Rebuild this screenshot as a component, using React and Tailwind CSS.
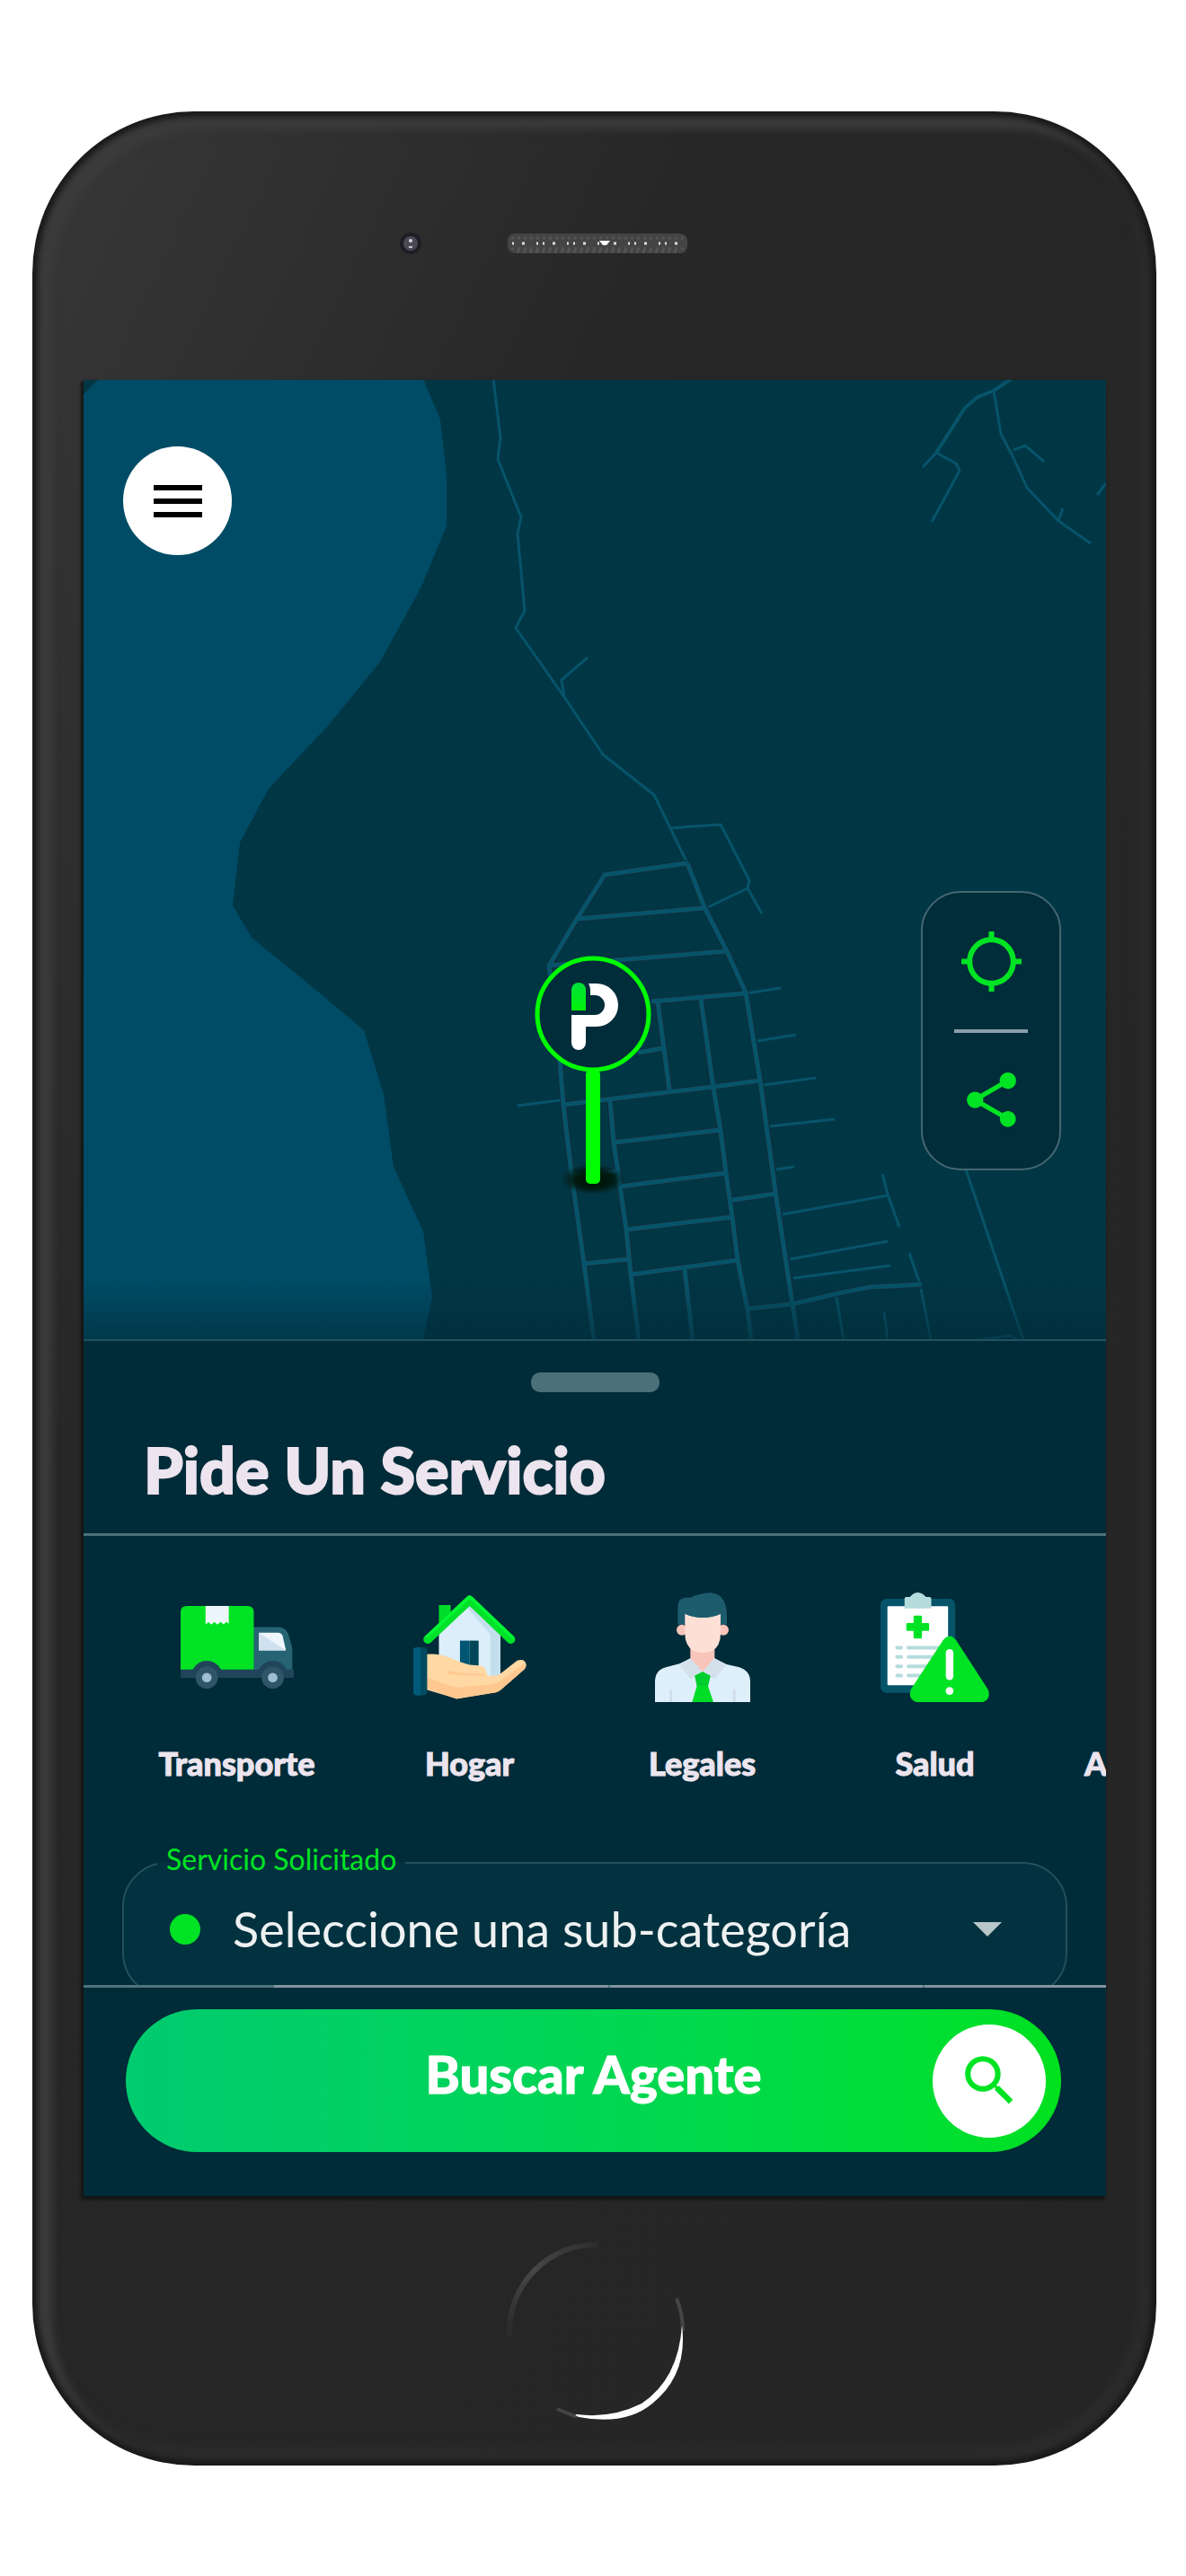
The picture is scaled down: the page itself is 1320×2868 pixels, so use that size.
import React from 'react';
import { MdLocationSearching, MdMenu, MdSearch, MdShare } from 'react-icons/md';

const mainRoads = [
  'M765 962 784 1011 809 1060 830 1106 846 1204 864 1335 882 1453 888 1493',
  'M765 962 673 975 642 1024 611 1076 623 1182 627 1231 636 1307 650 1408 661 1493',
  'M642 1024 784 1012M611 1076 809 1060M725 1116 830 1107M732 1116 745 1214',
  'M780 1113 794 1212 802 1260 808 1307 815 1356 821 1404 832 1459 836 1493',
  'M710 1173 738 1168M627 1231 668 1226 794 1211 846 1204',
  'M679 1226 683 1273 690 1321 697 1370 702 1420 711 1493',
  'M683 1273 802 1259M690 1322 808 1307M697 1370 815 1356M702 1420 821 1404',
  'M636 1309 686 1305M650 1408 699 1403M762 1414 771 1493M815 1337 864 1330',
  'M832 1458 882 1453 933 1441 968 1434 1026 1431',
];

const sideRoads = [
  'M549 423 557 488 554 512 580 577 576 595 584 681 574 700 628 777 671 841 728 886 746 923 765 962',
  'M628 777 625 758 654 733',
  'M746 923 802 919 834 981 832 990 788 1011M832 990 848 1018',
  'M830 1107 869 1101M843 1160 886 1153M850 1209 908 1201M857 1255 929 1247M864 1303 884 1300',
  'M576 1232 623 1226M871 1353 988 1332M982 1308 988 1331 1001 1367',
  'M879 1403 988 1383M883 1424 991 1410M1012 1396 1023 1428M1025 1436 1036 1493',
  'M931 1445 939 1493M984 1462 988 1493M1042 1205 1139 1493M1087 1493 1124 1488 1133 1493',
  'M1106 436 1114 484 1128 511 1143 544 1178 581 1214 606',
  'M1042 505 1064 517 1068 525 1037 582M1042 505 1027 521',
  'M1128 502 1141 497 1162 515M1178 580 1183 567M1231 539 1221 552',
];

function CityMap() {
  return (
    <svg
      className="absolute inset-0 h-full w-full"
      viewBox="93 423 1138 1070"
      preserveAspectRatio="xMidYMid slice"
      aria-hidden="true"
    >
      <defs>
        <linearGradient id="mapFade" x1="0" y1="0" x2="0" y2="1">
          <stop offset="0" stopColor="#012b38" stopOpacity="0" />
          <stop offset="1" stopColor="#012b38" stopOpacity="0.6" />
        </linearGradient>
        <linearGradient id="pinLogo" x1="0" y1="0" x2="0" y2="1">
          <stop offset="0" stopColor="#00e03c" />
          <stop offset="1" stopColor="#00f208" />
        </linearGradient>
        <radialGradient id="pinShadow">
          <stop offset="0" stopColor="#001204" />
          <stop offset="0.6" stopColor="#001508" stopOpacity="0.85" />
          <stop offset="1" stopColor="#001508" stopOpacity="0" />
        </radialGradient>
      </defs>

      <rect x="93" y="423" width="1138" height="1070" fill="#013645" />
      <path
        fill="#004c66"
        d="M110 423H471L490 468 497 530V586L469 654 423 738 365 809 299 879 267 939 259 1009 280 1045 349 1101 405 1148 427 1219 438 1300 471 1372 481 1445 471 1493H93V440Z"
      />

      <g fill="none" stroke="#07546a" strokeLinejoin="round">
        {sideRoads.map((d) => (
          <path key={d} d={d} strokeWidth="3" />
        ))}
        <path d="M1125 423 1106 436 1088 443 1074 455 1042 505" strokeWidth="4" />
      </g>
      <g fill="none" strokeLinejoin="round">
        {mainRoads.map((d) => (
          <path key={d} d={d} stroke="#12303e" strokeWidth="7" />
        ))}
        {mainRoads.map((d) => (
          <path key={d} d={d} stroke="#07546a" strokeWidth="5" />
        ))}
      </g>
      <rect x="93" y="1425" width="1138" height="68" fill="url(#mapFade)" />

      {/* Location pin */}
      <ellipse cx="660" cy="1314" rx="36" ry="17" fill="url(#pinShadow)" />
      <rect x="652" y="1192" width="16" height="127" rx="5" fill="#00ff00" />
      <circle cx="660" cy="1130" r="62" fill="#012c3a" stroke="#00ff00" strokeWidth="5" />
      <path d="M636 1126v-23a8 8 0 0 1 16 0v23Z" fill="url(#pinLogo)" />
      <path
        fill="#fff"
        d="M655 1096H664a24 24 0 0 1 0 48H652v18a8 8 0 0 1-16 0v-31h26a11 11 0 0 0 0-22h-5v-6q0-4-2-7Z"
      />
    </svg>
  );
}

function TruckIcon() {
  return (
    <svg viewBox="124 143 376 276" className="w-[126px]" aria-hidden="true">
      <path d="M366 213h83q24 0 33 24l9 31q4 10 4 20v68H366Z" fill="#266474" />
      <path d="M124 356V164q0-21 21-21h201q21 0 21 21v192Z" fill="#00e324" />
      <path d="M207 143h77v59l-8-6-9 8-10-8-11 9-10-9-10 9-9-8-10 7Z" fill="#edf6fc" />
      <path d="M124 354h40q17-29 47-29t48 29h124q17-29 47-29t47 29h23v28H124Z" fill="#20455a" />
      <path d="M384 232h63q12 0 16 11l11 48h-90Z" fill="#eef6fc" />
      <path d="M384 232 474 291H384Z" fill="#cfe0ee" />
      <g fill="#2f5569">
        <circle cx="211" cy="381" r="37" />
        <circle cx="430" cy="381" r="37" />
      </g>
      <g fill="#9fbdd3">
        <circle cx="211" cy="381" r="16" />
        <circle cx="430" cy="381" r="16" />
      </g>
    </svg>
  );
}

function HouseIcon() {
  return (
    <svg viewBox="900 108 376 346" className="w-[126px]" aria-hidden="true">
      <path d="M985 141h39v50l-39 28Z" fill="#00dc28" />
      <path d="M985 232 1087 144 1189 236V380H985Z" fill="#dceefa" />
      <path d="M1080 151 1087 144 1189 236V380h-33V238Z" fill="#c3dfee" />
      <path d="M1055 259h31v90h-31Z" fill="#005673" />
      <path d="M1086 259h31v90h-31Z" fill="#014659" />
      <path
        d="M948 255 1087 124 1224 255"
        fill="none"
        stroke="#00e12a"
        strokeWidth="29"
        strokeLinecap="round"
        strokeLinejoin="round"
      />
      <path
        d="M945 246 1087 113 1230 249"
        fill="none"
        stroke="#00fa36"
        strokeWidth="9"
        strokeLinecap="round"
        strokeLinejoin="round"
      />
      <path
        d="M944 304q46-3 80 13 32 14 62 22l40 3q16 4 20 34h25q10 0 17-6l56-44q20-8 28 4 7 12-3 24l-77 67q-8 7-18 10l-130 21-100-30Z"
        fill="#ffd8a4"
      />
      <path
        d="M944 382 1040 415 1150 406q26-2 42-16l78-56q9 8-1 20l-77 67q-8 7-18 10l-130 22-100-35Z"
        fill="#ffc890"
      />
      <path d="M1015 359q30 9 108 10l20 7h-40q-60-2-84-6-6-5-4-11Z" fill="#ffc890" />
      <rect x="900" y="281" width="46" height="160" rx="12" fill="#014a5f" />
      <path d="M912 281h13v160h-13q-12 0-12-12V293q0-12 12-12Z" fill="#005a78" />
    </svg>
  );
}

function LawyerIcon() {
  return (
    <svg viewBox="264 97 318 367" className="w-[106px]" aria-hidden="true">
      <path d="M340 204V147q0-37 42-33 30-14 64-16 58 0 58 80v26Z" fill="#1d5c6d" />
      <g fill="#f9c4ba">
        <circle cx="354" cy="222" r="18" />
        <circle cx="492" cy="222" r="18" />
        <path d="M382 270h81v60l-40 36-41-36Z" />
      </g>
      <path
        d="M264 463V395q0-38 36-48l46-12 36-18 41 46 40-46 40 20 43 10q36 12 36 48v68Z"
        fill="#deeffc"
      />
      <path d="M364 168q60 26 119 0v66q0 42-28 58-31 14-63 0-28-18-28-58Z" fill="#fedfd6" />
      <path d="M364 168q60 26 119 0v-30H364Z" fill="#1d5c6d" />
      <path d="M382 317 423 361 383 386 345 340ZM463 317 423 361 462 386 503 340Z" fill="#d4e1eb" />
      <path d="M317 422v41M529 422v41" stroke="#d0dde6" strokeWidth="8" />
      <path d="M397 375l26-13 26 13-8 34 18 54h-71l16-54Z" fill="#00dd27" />
      <path d="M397 375l26-13 26 13-8 34h-37Z" fill="#00ce2f" />
    </svg>
  );
}

function HealthIcon() {
  return (
    <svg viewBox="1018 97 362 367" className="w-[121px]" aria-hidden="true">
      <rect x="1018" y="118" width="249" height="313" rx="20" fill="#055469" />
      <rect x="1041" y="143" width="202" height="263" rx="3" fill="#fff" />
      <path d="M1098 150v-32q0-6 6-6h12q10-14 26-15 17 1 27 15h12q6 0 6 6v32Z" fill="#b5dcdd" />
      <path
        d="M1132 174h20q4 0 4 4v21h20q4 0 4 4v18q0 4-4 4h-20v21q0 4-4 4h-20q-4 0-4-4v-21h-20q-4 0-4-4v-18q0-4 4-4h20v-21q0-4 4-4Z"
        fill="#00e324"
      />
      <path
        d="M1073 281h14M1111 281h110M1073 312h14M1111 312h80M1073 343h14M1111 343h70M1073 374h14M1111 374h60"
        stroke="#b5dcdd"
        strokeWidth="12"
        strokeLinecap="round"
      />
      <path
        d="M1226 256q22-28 44 0L1376 420q12 34-20 43H1142q-34-8-23-43Z"
        fill="#00e324"
      />
      <path d="M1248 298v78" stroke="#fff" strokeWidth="25" strokeLinecap="round" />
      <circle cx="1248" cy="425" r="13" fill="#fff" />
    </svg>
  );
}

const categories = [
  { name: 'Transporte', Icon: TruckIcon },
  { name: 'Hogar', Icon: HouseIcon },
  { name: 'Legales', Icon: LawyerIcon },
  { name: 'Salud', Icon: HealthIcon },
];

function Category({ name, Icon }) {
  return (
    <button type="button" className="flex w-[259px] shrink-0 flex-col items-center gap-11">
      <span className="flex h-[122px] items-center">
        <Icon />
      </span>
      <span className="text-[36px] leading-[48px] font-black text-[#ece4ee] [-webkit-text-stroke:1px_#ece4ee]">
        {name}
      </span>
    </button>
  );
}

function MapView() {
  return (
    <section className="relative h-[1070px] overflow-hidden border-b-2 border-[#23525f]">
      <CityMap />
      <button
        type="button"
        aria-label="Menú"
        className="absolute top-[74px] left-11 flex size-[121px] items-center justify-center rounded-full bg-white"
      >
        <MdMenu className="size-[72px] text-black" />
      </button>

      <div className="absolute top-[569px] right-[50px] flex h-[311px] w-[156px] flex-col items-center justify-between rounded-[44px] border-2 border-[#456772] bg-[#012b38]/92 py-10">
        <button type="button" aria-label="Mi ubicación">
          <MdLocationSearching className="size-[73px] text-[#00e324]" />
        </button>
        <div className="h-1 w-[82px] bg-[#8a9fab]" />
        <button type="button" aria-label="Compartir">
          <MdShare className="size-[73px] text-[#00e324]" />
        </button>
      </div>
    </section>
  );
}

function ServiceSheet() {
  return (
    <section className="flex flex-col">
      <div className="mx-auto mt-[35px] h-[22px] w-[143px] rounded-[10px] bg-[#4b7079]" />
      <h1 className="mt-11 px-[67px] text-[70px] leading-[84px] font-black text-[#ece4ee] [-webkit-text-stroke:2px_#ece4ee]">
        Pide Un Servicio
      </h1>
      <div className="mt-[29px] h-[3px] bg-[#4b7079]" />

      <div className="flex overflow-hidden pt-[63px] pl-[41px]">
        {categories.map((c) => (
          <Category key={c.name} {...c} />
        ))}
        <button type="button" className="mt-[166px] w-[259px] shrink-0 pl-[37px] text-left">
          <span className="text-[36px] leading-[48px] font-black text-[#ece4ee] [-webkit-text-stroke:1px_#ece4ee]">
            A
          </span>
        </button>
      </div>

      <div className="mt-[61px] h-[162px] overflow-hidden px-[43px] pt-1">
        <fieldset className="rounded-[50px] border-2 border-[#24505d] bg-[#02323f] pb-[22px]">
          <legend className="ml-[37px] px-[10px] pb-2 text-[32px] leading-[36px] text-[#00e324]">
            <label htmlFor="subcategory" className="block">
              Servicio Solicitado
            </label>
          </legend>
          <div className="flex h-[104px] items-center pr-[71px] pl-[51px]">
            <span className="size-[34px] shrink-0 rounded-full bg-[#00e324]" />
            <select
              id="subcategory"
              className="ml-9 min-w-0 flex-1 appearance-none bg-transparent text-[54px] leading-[72px] text-[#eef1f2] outline-none"
            >
              <option>Seleccione una sub-categoría</option>
            </select>
            <svg viewBox="0 0 32 16" className="w-8 shrink-0" aria-hidden="true">
              <path d="M0 0h32L16 16Z" fill="#b9c6ca" />
            </svg>
          </div>
        </fieldset>
      </div>
    </section>
  );
}

function SearchBar() {
  return (
    <footer className="bg-[#002b38]">
      {/* Divider with the cards' edge peeking over it */}
      <div className="flex h-[3px] gap-[2px] bg-[#4f747e]">
        <span className="w-[210px]" />
        <span className="w-[372px] bg-[#82949c]" />
        <span className="w-[348px] bg-[#82949c]" />
        <span className="flex-1 bg-[#82949c]" />
      </div>
      <div className="pt-6 pr-[50px] pb-[49px] pl-[47px]">
        <button
          type="button"
          className="grid h-[159px] w-full grid-cols-[126px_1fr_126px] items-center rounded-full bg-linear-to-r from-[#00cb70] to-[#00e11d] px-[17px]"
        >
          <span className="col-start-2 pb-4 text-center text-[58px] leading-[72px] font-black text-white [-webkit-text-stroke:1px_#fff]">
            Buscar Agente
          </span>
          <span className="flex size-[126px] items-center justify-center rounded-full bg-white">
            <MdSearch className="size-[73px] text-[#00e324]" />
          </span>
        </button>
      </div>
    </footer>
  );
}

function Bezel() {
  return (
    <div className="flex h-[299px] items-center justify-center pb-2 pl-[6px]">
      <div className="grid w-full grid-cols-[1fr_200px_1fr] items-center pt-[3px]">
        <div className="mr-[96px] flex size-6 items-center justify-center justify-self-end rounded-full bg-[#1e1d25]">
          <div className="flex size-4 flex-col items-center justify-center gap-1 rounded-full bg-[#4a4852]">
            <div className="size-1 rounded-full bg-[#d8d6e4]" />
            <div className="h-[2px] w-1 bg-[#c6c4d2]" />
          </div>
        </div>
        <svg viewBox="0 0 200 22" className="w-[200px]" aria-hidden="true">
          <rect width="200" height="22" rx="8" fill="#444" />
          <path
            d="M4 5h192M4 17h192M10 20h180"
            stroke="#545454"
            strokeWidth="3"
            strokeDasharray="3 4"
          />
          <path d="M5 11h190" stroke="#ddd" strokeWidth="3" strokeDasharray="2 9 3 13 2 5" />
          <path d="M102 8h12l-4 5h-4Z" fill="#fff" />
        </svg>
      </div>
    </div>
  );
}

function HomeButton() {
  return (
    <div className="flex h-[300px] items-center justify-center">
      <button type="button" aria-label="Inicio" className="size-[200px] rounded-full">
        <svg viewBox="0 0 200 200" className="size-full" fill="none" aria-hidden="true">
          <defs>
            <linearGradient id="homeDim" x1="0" y1="1" x2="1" y2="0">
              <stop offset="0" stopColor="#484848" stopOpacity="0.1" />
              <stop offset="0.5" stopColor="#484848" />
              <stop offset="1" stopColor="#484848" stopOpacity="0.2" />
            </linearGradient>
          </defs>
          <path d="M5 106A97 97 0 0 1 104 4" stroke="url(#homeDim)" strokeWidth="6" />
          <path d="M191 64A97 97 0 0 1 198 100M58 187 80 196" stroke="#454545" strokeWidth="4" />
          <path
            d="M197 94Q204 149 164 181 134 206 82 196 76 193 80 193 118 198 152 181 193 154 197 94Z"
            fill="#fff"
          />
        </svg>
      </button>
    </div>
  );
}

export default function App() {
  return (
    <main className="min-h-screen bg-white pt-[124px] pr-[33px] pb-[123px] pl-9 font-[Lato,'Open_Sans',sans-serif]">
      <div className="rounded-[180px] bg-[#272727] bg-linear-to-br from-[#383838] via-[#272727] via-30% to-[#252525] pr-14 pl-[57px] shadow-[inset_0_0_6px_6px_#191919,inset_14px_12px_10px_8px_#3b3b3b,inset_-8px_-10px_14px_10px_#2c2c2c]">
        <Bezel />
        <div className="overflow-hidden bg-[#002b38] shadow-[-2px_3px_3px_1px_#141414]">
          <MapView />
          <ServiceSheet />
          <SearchBar />
        </div>
        <HomeButton />
      </div>
    </main>
  );
}
